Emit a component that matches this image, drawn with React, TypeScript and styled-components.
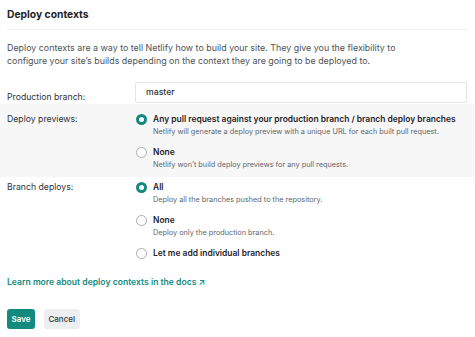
import React from "react";
import styled, { createGlobalStyle } from "styled-components";

const GlobalStyle = createGlobalStyle`
  html, body {
    margin: 0;
    padding: 0;
    background: #fff;
  }
  body {
    font-family: Inter, "Noto Sans", sans-serif;
    color: #2e3338;
    -webkit-font-smoothing: antialiased;
  }
`;

const Page = styled.div`
  width: 475px;
  padding-bottom: 8px;
`;

const Header = styled.div`
  margin: 0 8px 0 7px;
  padding: 7.5px 0 8.5px;
  border-bottom: 1px solid #efefef;
`;

const Title = styled.h2`
  margin: 0;
  font-size: 10.3px;
  line-height: 13px;
  font-weight: 700;
  color: #1f2428;
`;

const Intro = styled.p`
  margin: 11px 7px 0;
  font-size: 8.9px;
  line-height: 13px;
  color: #4d5358;
  white-space: nowrap;
`;

const Row = styled.div<{ $shaded?: boolean }>`
  display: grid;
  grid-template-columns: 128px 1fr;
  padding: ${(p) => (p.$shaded ? "9.5px 8px 6px 7px" : "3.5px 8px 0 7px")};
  background: ${(p) => (p.$shaded ? "#f7f7f8" : "transparent")};
`;

const InputRow = styled(Row)`
  margin-top: 14.5px;
  padding-top: 0;
  padding-bottom: 0;
`;

const Label = styled.div<{ $offset?: number }>`
  font-size: 8.7px;
  line-height: 13px;
  color: #2e3338;
  padding-top: ${(p) => p.$offset ?? 0}px;
`;

const TextInput = styled.input`
  box-sizing: border-box;
  width: 100%;
  height: 21px;
  padding: 0 10px;
  border: 1px solid #e4e5e7;
  border-radius: 2px;
  font-family: inherit;
  font-size: 8.7px;
  font-weight: 500;
  color: #2e3338;
  background: #fff;
  outline: none;
`;

const Options = styled.div`
  display: flex;
  flex-direction: column;
  gap: 8px;
`;

const Option = styled.label`
  display: grid;
  grid-template-columns: 11px 1fr;
  column-gap: 6px;
  align-items: start;
  padding-left: 1px;
`;

const Radio = styled.span<{ $checked?: boolean }>`
  box-sizing: border-box;
  width: 11px;
  height: 11px;
  margin-top: 1px;
  border-radius: 50%;
  border: ${(p) => (p.$checked ? "3.5px solid #128a7e" : "1px solid #a9adb1")};
  background: #fff;
`;

const OptionTitle = styled.div`
  font-size: 8.45px;
  line-height: 13px;
  font-weight: 600;
  white-space: nowrap;
  color: #1f2428;
`;

const OptionDesc = styled.div`
  grid-column: 2;
  font-size: 7.3px;
  line-height: 12px;
  color: #5e656b;
`;

const DocsLink = styled.a`
  display: block;
  margin: 16.5px 7px 0;
  font-size: 8.6px;
  line-height: 13px;
  font-weight: 600;
  color: #128a7e;
  text-decoration: none;
`;

const Actions = styled.div`
  display: flex;
  gap: 9px;
  margin: 20px 7px 0;
`;

const Button = styled.button<{ $primary?: boolean }>`
  height: 20px;
  padding: 0 4.5px;
  border: none;
  border-radius: 3px;
  font-family: inherit;
  font-size: 8px;
  font-weight: ${(p) => (p.$primary ? 600 : 500)};
  color: ${(p) => (p.$primary ? "#fff" : "#2e3338")};
  background: ${(p) => (p.$primary ? "#128a7e" : "#eceef0")};
`;

type Choice = { title: string; desc?: string; checked?: boolean };

const RadioGroup = ({ choices }: { choices: Choice[] }) => (
  <Options>
    {choices.map((c) => (
      <Option key={c.title}>
        <Radio $checked={c.checked} />
        <OptionTitle>{c.title}</OptionTitle>
        {c.desc && <OptionDesc>{c.desc}</OptionDesc>}
      </Option>
    ))}
  </Options>
);

const App = (): JSX.Element => {
  return (
    <>
      <GlobalStyle />
      <Page>
        <Header>
          <Title>Deploy contexts</Title>
        </Header>
        <Intro>
          Deploy contexts are a way to tell Netlify how to build your site. They
          give you the flexibility to
          <br />
          configure your site’s builds depending on the context they are going
          to be deployed to.
        </Intro>

        <InputRow>
          <Label $offset={9}>Production branch:</Label>
          <TextInput defaultValue="master" />
        </InputRow>

        <Row $shaded>
          <Label>Deploy previews:</Label>
          <RadioGroup
            choices={[
              {
                title:
                  "Any pull request against your production branch / branch deploy branches",
                desc: "Netlify will generate a deploy preview with a unique URL for each built pull request.",
                checked: true,
              },
              {
                title: "None",
                desc: "Netlify won’t build deploy previews for any pull requests.",
              },
            ]}
          />
        </Row>

        <Row>
          <Label>Branch deploys:</Label>
          <RadioGroup
            choices={[
              {
                title: "All",
                desc: "Deploy all the branches pushed to the repository.",
                checked: true,
              },
              { title: "None", desc: "Deploy only the production branch." },
              { title: "Let me add individual branches" },
            ]}
          />
        </Row>

        <DocsLink href="#">Learn more about deploy contexts in the docs ↗</DocsLink>

        <Actions>
          <Button $primary>Save</Button>
          <Button>Cancel</Button>
        </Actions>
      </Page>
    </>
  );
};

export default App;
